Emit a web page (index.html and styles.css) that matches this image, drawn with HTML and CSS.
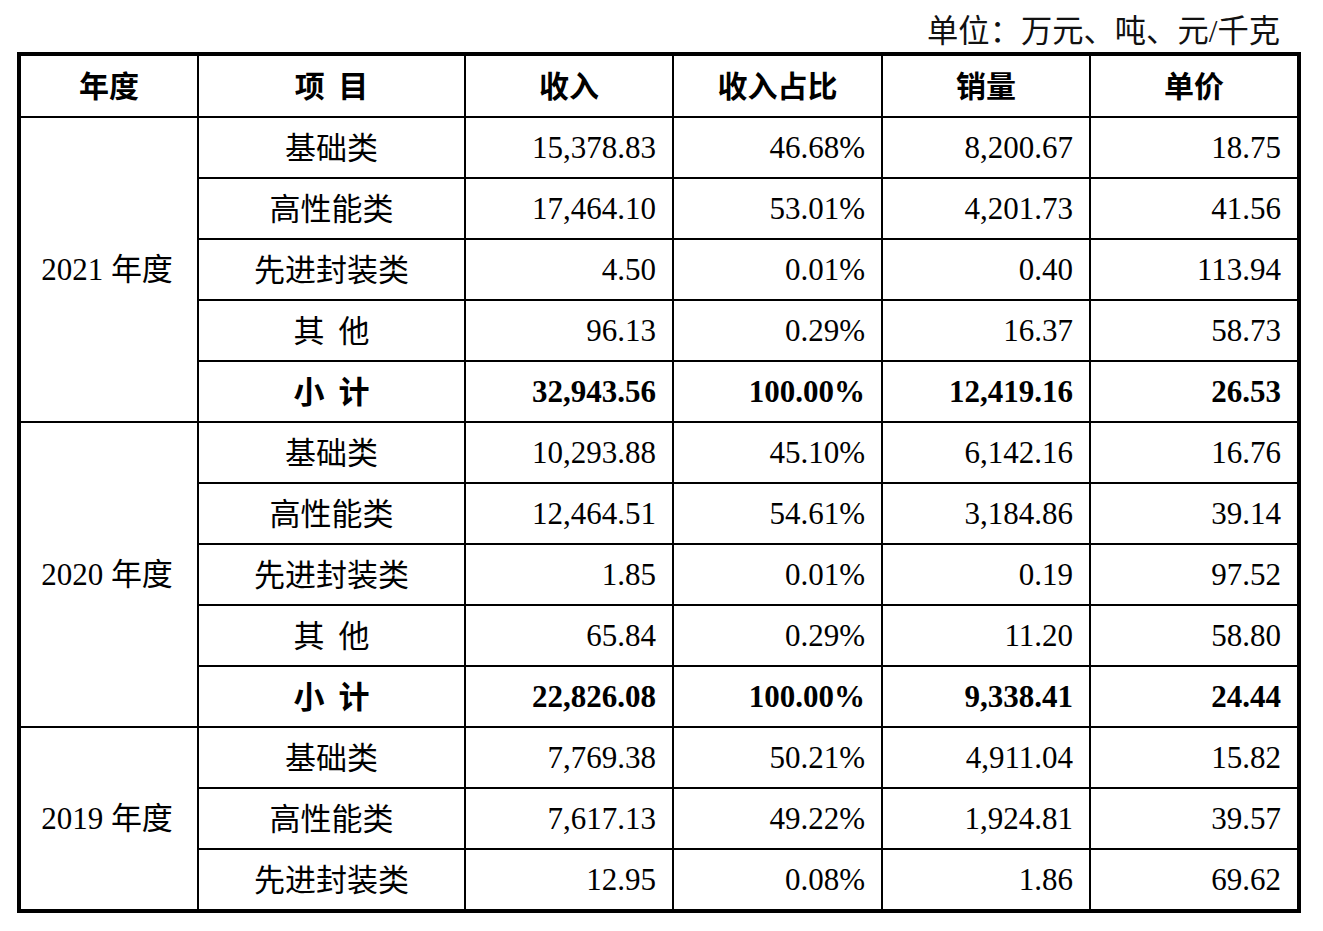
FILE: index.html
```html
<!DOCTYPE html>
<html lang="zh">
<head>
<meta charset="utf-8">
<title>收入明细</title>
<link rel="stylesheet" href="styles.css">
</head>
<body>
<div class="unit">单位：万元、吨、元/千克</div>
<table class="tbl">
  <thead>
    <tr>
      <th class="c1">年度</th>
      <th class="c2">项&nbsp;&nbsp;目</th>
      <th class="c3">收入</th>
      <th class="c4">收入占比</th>
      <th class="c5">销量</th>
      <th class="c6 last-col">单价</th>
    </tr>
  </thead>
  <tbody>
    <tr>
      <td class="year" rowspan="5">2021 年度</td>
      <td class="item">基础类</td>
      <td class="num">15,378.83</td>
      <td class="num">46.68%</td>
      <td class="num">8,200.67</td>
      <td class="num last-col">18.75</td>
    </tr>
    <tr>
      <td class="item">高性能类</td>
      <td class="num">17,464.10</td>
      <td class="num">53.01%</td>
      <td class="num">4,201.73</td>
      <td class="num last-col">41.56</td>
    </tr>
    <tr>
      <td class="item">先进封装类</td>
      <td class="num">4.50</td>
      <td class="num">0.01%</td>
      <td class="num">0.40</td>
      <td class="num last-col">113.94</td>
    </tr>
    <tr>
      <td class="item">其&nbsp;&nbsp;他</td>
      <td class="num">96.13</td>
      <td class="num">0.29%</td>
      <td class="num">16.37</td>
      <td class="num last-col">58.73</td>
    </tr>
    <tr class="total">
      <td class="item">小&nbsp;&nbsp;计</td>
      <td class="num">32,943.56</td>
      <td class="num">100.00%</td>
      <td class="num">12,419.16</td>
      <td class="num last-col">26.53</td>
    </tr>
    <tr>
      <td class="year" rowspan="5">2020 年度</td>
      <td class="item">基础类</td>
      <td class="num">10,293.88</td>
      <td class="num">45.10%</td>
      <td class="num">6,142.16</td>
      <td class="num last-col">16.76</td>
    </tr>
    <tr>
      <td class="item">高性能类</td>
      <td class="num">12,464.51</td>
      <td class="num">54.61%</td>
      <td class="num">3,184.86</td>
      <td class="num last-col">39.14</td>
    </tr>
    <tr>
      <td class="item">先进封装类</td>
      <td class="num">1.85</td>
      <td class="num">0.01%</td>
      <td class="num">0.19</td>
      <td class="num last-col">97.52</td>
    </tr>
    <tr>
      <td class="item">其&nbsp;&nbsp;他</td>
      <td class="num">65.84</td>
      <td class="num">0.29%</td>
      <td class="num">11.20</td>
      <td class="num last-col">58.80</td>
    </tr>
    <tr class="total">
      <td class="item">小&nbsp;&nbsp;计</td>
      <td class="num">22,826.08</td>
      <td class="num">100.00%</td>
      <td class="num">9,338.41</td>
      <td class="num last-col">24.44</td>
    </tr>
    <tr>
      <td class="year last-row" rowspan="3">2019 年度</td>
      <td class="item">基础类</td>
      <td class="num">7,769.38</td>
      <td class="num">50.21%</td>
      <td class="num">4,911.04</td>
      <td class="num last-col">15.82</td>
    </tr>
    <tr>
      <td class="item">高性能类</td>
      <td class="num">7,617.13</td>
      <td class="num">49.22%</td>
      <td class="num">1,924.81</td>
      <td class="num last-col">39.57</td>
    </tr>
    <tr class="final">
      <td class="item last-row">先进封装类</td>
      <td class="num last-row">12.95</td>
      <td class="num last-row">0.08%</td>
      <td class="num last-row">1.86</td>
      <td class="num last-row last-col">69.62</td>
    </tr>
  </tbody>
</table>
</body>
</html>
```

FILE: styles.css
```css
* {
  box-sizing: border-box;
}

html, body {
  margin: 0;
  padding: 0;
  background: #ffffff;
}

body {
  font-family: "Liberation Serif", "Noto Sans CJK SC", serif;
  color: #000000;
  width: 1323px;
}

.unit {
  height: 52px;
  padding-top: 13px;
  padding-right: 43px;
  text-align: right;
  font-size: 31.3px;
  line-height: 38px;
  color: #111111;
}

.tbl {
  margin-left: 17px;
  width: 1284px;
  table-layout: fixed;
  border-collapse: separate;
  border-spacing: 0;
  border: 4px solid #000000;
  font-size: 31px;
}

.tbl th,
.tbl td {
  padding: 0;
  border-right: 2px solid #000000;
  border-bottom: 2px solid #000000;
  height: 61px;
  vertical-align: middle;
  white-space: nowrap;
  line-height: 36px;
}

.tbl th {
  height: 62px;
  padding-bottom: 5px;
  font-family: "Noto Sans CJK SC", sans-serif;
  font-weight: 700;
  font-size: 30px;
  text-align: center;
}

.c1 { width: 178px; }
.c2 { width: 267px; }
.c3 { width: 208px; }
.c4 { width: 209px; }
.c5 { width: 208px; }
.c6 { width: 206px; }

.tbl .last-col {
  border-right: none;
}

.tbl .last-row {
  border-bottom: none;
}

.tbl tr.final td {
  height: 59px;
}

.year {
  text-align: center;
  padding-right: 4px !important;
  font-family: "Liberation Serif", "Noto Sans CJK SC", serif;
  font-weight: 400;
}

.tbl .item {
  text-align: center;
  padding-bottom: 4px;
  font-family: "Noto Sans CJK SC", sans-serif;
  font-weight: 400;
  font-size: 31px;
}

.num {
  text-align: right;
  padding-right: 16px !important;
  font-family: "Liberation Serif", serif;
}

.total td {
  font-weight: 700;
}

.total .item {
  font-weight: 700;
}
```
